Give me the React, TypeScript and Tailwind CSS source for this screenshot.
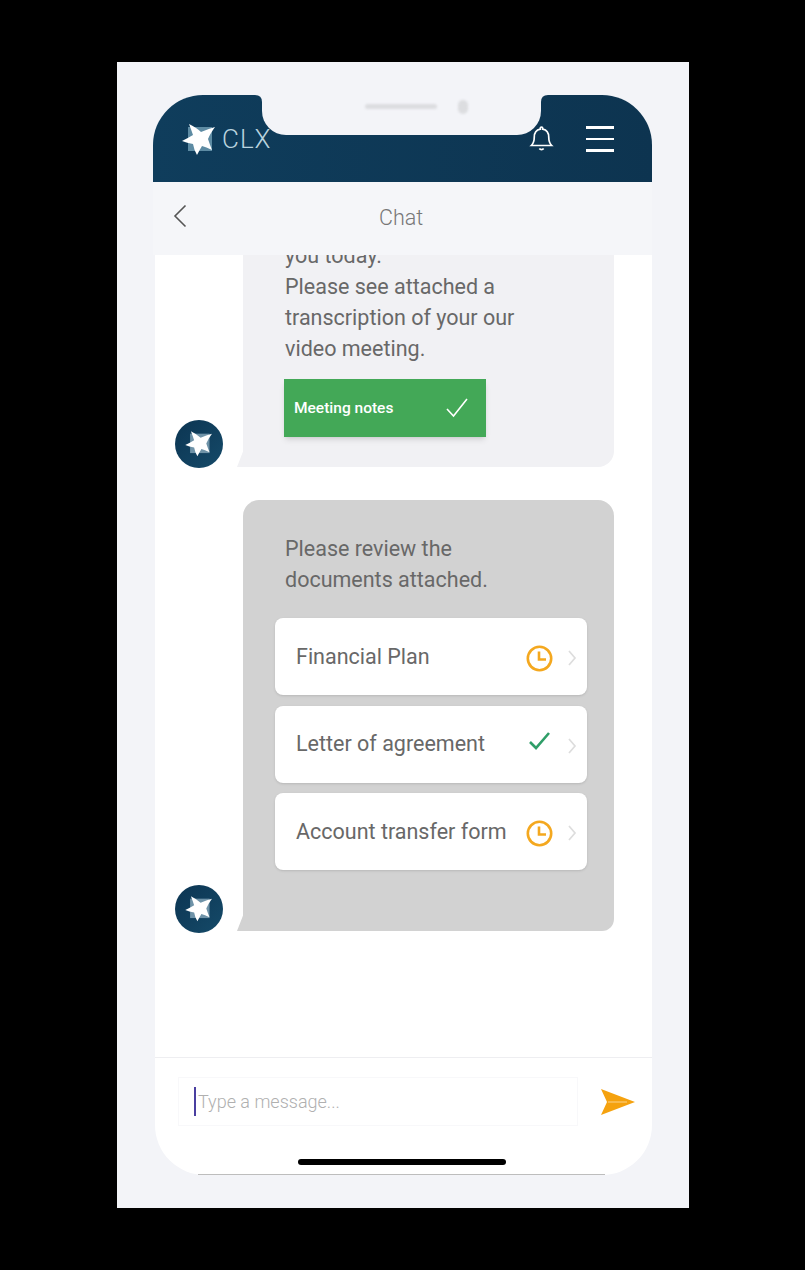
const StarMark = ({ width, squareFill = "#5d8ba3" }: { width: number; squareFill?: string }) => (
  <svg width={width} height={(width * 40) / 42} viewBox="0 0 42 40">
    <rect x="10" y="7" width="24" height="24" fill={squareFill} />
    <path
      d="M11 4 Q19 8 23 12 Q30 9 37 7 Q32 14 30 19 Q32 25 34 30 Q28 27 24 26 Q21 31 19 35 Q16 30 15 24 Q9 23 4 21 Q10 18 15 15 Q13 9 11 4 Z"
      fill="#ffffff"
    />
  </svg>
);

const Avatar = ({ className }: { className: string }) => (
  <div className={`flex h-12 w-12 shrink-0 items-center justify-center rounded-full bg-gradient-to-br from-[#0c3552] to-[#154a69] ${className}`}>
    <StarMark width={34} squareFill="#6f93a8" />
  </div>
);

const BubbleTail = ({ fill }: { fill: string }) => (
  <svg className="absolute bottom-0 left-[-6px]" width="7" height="18" viewBox="0 0 7 18">
    <path d="M7 0 L0 18 L7 18 Z" fill={fill} />
  </svg>
);

const ClockIcon = () => (
  <svg width="27" height="27" viewBox="0 0 27 27" className="mt-[3px]">
    <circle cx="13.5" cy="13.5" r="11.7" fill="none" stroke="#f4a81f" strokeWidth="2.6" />
    <path d="M13 6.5 V14.5 H20" fill="none" stroke="#f4a81f" strokeWidth="2.6" />
  </svg>
);

const CheckIcon = () => (
  <svg width="27" height="20" viewBox="0 0 27 20" className="-mt-[6px]">
    <path d="M4 11 L10 17 L23 2" fill="none" stroke="#2f9e68" strokeWidth="2.6" />
  </svg>
);

interface DocRowProps {
  label: string;
  done?: boolean;
}

const DocRow = ({ label, done }: DocRowProps) => (
  <div className="flex h-[77px] items-center rounded-lg bg-white pl-[21px] pr-[10px] shadow-sm">
    <span className="mt-[1px] flex-1 text-[21.5px] text-[#686868]">{label}</span>
    {done ? <CheckIcon /> : <ClockIcon />}
    <svg width="10" height="18" viewBox="0 0 10 18" className="ml-[14px] mt-[3px]">
      <path d="M2 2 L8 9 L2 16" fill="none" stroke="#dddddd" strokeWidth="1.7" />
    </svg>
  </div>
);

export default function App() {
  return (
    <div className="h-[1270px] w-[805px] overflow-hidden bg-black pl-[117px] pt-[62px] font-['Roboto',sans-serif]">
      <div className="h-[1146px] w-[572px] bg-[#f3f4f8] pl-[36px] pr-[37px] pt-[33px]">
        {/* top bar */}
        <div className="relative flex h-[87px] items-start rounded-t-[50px] bg-gradient-to-r from-[#0f3d5c] to-[#0d3450] pl-[25px] pr-[38px] pt-[25px]">
          <StarMark width={42} />
          <span className="ml-[2px] mt-[3px] text-[26px] font-light leading-[32px] tracking-[1px] text-[#b9d3df]">CLX</span>
          <div className="flex-1" />
          <svg width="29" height="29" viewBox="0 0 24 24" className="mt-[4px]" fill="none" stroke="#ffffff" strokeWidth="1.4">
            <path d="M12 2.5 a1 1 0 0 1 1 1 V4.3 C16.4 5 18 7.8 18 11 c0 4 1 5.4 2.4 6.8 H3.6 C5 16.4 6 15 6 11 c0-3.2 1.6-6 5-6.7 V3.5 a1 1 0 0 1 1-1 Z" />
            <path d="M10.2 20.3 a2.2 2.2 0 0 0 3.6 0" />
          </svg>
          <div className="ml-[30px] mt-[6px] flex w-[28px] flex-col gap-[9px]">
            <div className="h-[2.5px] bg-white" />
            <div className="h-[2.5px] bg-white" />
            <div className="h-[2.5px] bg-white" />
          </div>
          {/* notch */}
          <div className="absolute left-[109px] top-0 flex h-[40px] w-[279px] items-start justify-center gap-[21px] rounded-b-[24px] bg-[#f3f4f8] pl-[30px] pt-[9px]">
            <div className="h-[5px] w-[72px] rounded-full bg-[#dcdde0] blur-[1px]" />
            <div className="-mt-[4px] h-[14px] w-[10px] rounded-full bg-[#dcdde0] blur-[1px]" />
          </div>
          <svg className="absolute left-[102px] top-0" width="7" height="7" viewBox="0 0 7 7">
            <path d="M0 0 H7 V7 Q7 0 0 0 Z" fill="#f3f4f8" />
          </svg>
          <svg className="absolute left-[388px] top-0" width="7" height="7" viewBox="0 0 7 7">
            <path d="M7 0 H0 V7 Q0 0 7 0 Z" fill="#f3f4f8" />
          </svg>
        </div>

        {/* title */}
        <div className="flex h-[73px] items-center bg-[#f5f6f9] pl-[20px]">
          <svg width="14" height="24" viewBox="0 0 14 24" className="-mt-[6px]">
            <path d="M12.5 1.5 L2 12 L12.5 22.5" fill="none" stroke="#555555" strokeWidth="1.6" />
          </svg>
          <span className="ml-[192px] text-[21.5px] font-light text-[#777777]">Chat</span>
        </div>

        {/* messages */}
        <div className="ml-[2px] h-[802px] overflow-hidden bg-white pl-[20px]">
          <div className="-mt-[15px] flex items-end">
            <Avatar className="-mb-[1px]" />
            <div className="relative ml-[20px] h-[227px] w-[371px] rounded-br-2xl bg-[#f1f1f4] pl-[42px]">
              <BubbleTail fill="#f1f1f4" />
              <p className="text-[21.5px] leading-[31px] text-[#686868]">
                you today.
                <br />
                Please see attached a
                <br />
                transcription of your our
                <br />
                video meeting.
              </p>
              <div className="-ml-[1px] mt-[15px] flex h-[58px] w-[202px] items-center justify-between bg-[#43a857] pl-[10px] pr-[17px] shadow-md">
                <span className="mt-[1px] text-[15.5px] font-medium text-white">Meeting notes</span>
                <svg width="24" height="24" viewBox="0 0 24 24" fill="none" stroke="#ffffff" strokeWidth="1.6">
                  <path d="M2 13 L8.5 20 L22 3" />
                </svg>
              </div>
            </div>
          </div>

          <div className="mt-[33px] flex items-end">
            <Avatar className="-mb-[2px]" />
            <div className="relative ml-[20px] h-[431px] w-[371px] rounded-t-2xl rounded-br-xl bg-[#d2d2d2] pt-[33px]">
              <BubbleTail fill="#d2d2d2" />
              <p className="pl-[42px] text-[21.5px] leading-[31px] text-[#686868]">
                Please review the
                <br />
                documents attached.
              </p>
              <div className="ml-[32px] mt-[23px] flex w-[312px] flex-col gap-[10.5px]">
                <DocRow label="Financial Plan" />
                <DocRow label="Letter of agreement" done />
                <DocRow label="Account transfer form" />
              </div>
            </div>
          </div>
        </div>

        {/* composer */}
        <div className="ml-[2px] h-[118px] rounded-b-[50px] border-t border-[#eeeef1] bg-white pl-[23px] pt-[19px]">
          <div className="flex items-center">
            <div className="flex h-[49px] w-[400px] items-center border border-[#f8f8fa] pl-[15px]">
              <div className="h-[29px] w-[2px] bg-[#4a3fa0]" />
              <span className="ml-[2px] text-[18px] font-light text-[#b0b0b0]">Type a message...</span>
            </div>
            <svg width="34" height="26" viewBox="0 0 34 26" className="ml-[23px]">
              <path d="M0 0 L34 13 L0 26 L6 13 Z" fill="#f5a20f" />
              <path d="M7 13 H26" stroke="#fbd38d" strokeWidth="1" />
            </svg>
          </div>
          <div className="ml-[120px] mt-[33px] h-[6px] w-[208px] rounded-full bg-black" />
          <div className="ml-[20px] mt-[9px] h-px w-[407px] bg-[#bdbdbd]" />
        </div>
      </div>
    </div>
  );
}
